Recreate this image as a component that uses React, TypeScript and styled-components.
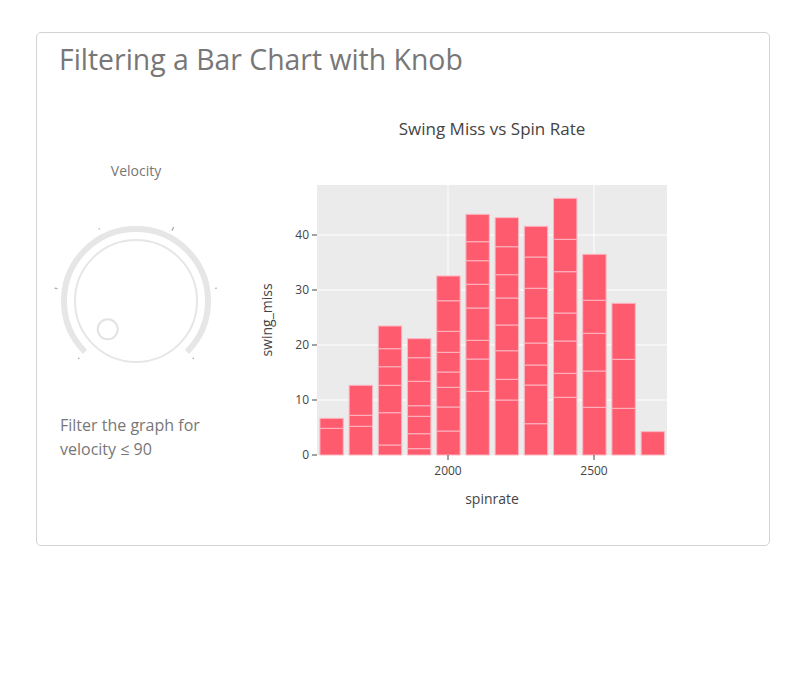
import styled, { createGlobalStyle } from 'styled-components';

const GlobalStyle = createGlobalStyle`
  body {
    margin: 0;
    background: #fff;
    font-family: "Open Sans", "Liberation Sans", sans-serif;
  }
`;

const Page = styled.div`
  padding: 32px 36px 0;
`;

const Card = styled.section`
  border: 1px solid #d3d3d3;
  border-radius: 5px;
  padding: 0 23px 10px;
`;

const Title = styled.h1`
  margin: 7px 0 7px -1px;
  font-size: 28.4px;
  font-weight: 400;
  line-height: 38px;
  color: #777;
`;

const Row = styled.div`
  display: flex;
  align-items: flex-start;
  gap: 25px;
`;

const KnobColumn = styled.div`
  width: 152px;
  flex: none;
  display: flex;
  flex-direction: column;
  padding-top: 76px;
`;

const KnobLabel = styled.div`
  text-align: center;
  font-size: 14px;
  line-height: 20px;
  color: #777;
`;

const KnobSvg = styled.svg`
  display: block;
  overflow: visible;
  margin-top: 35px;
`;

const Caption = styled.p`
  margin: 27px 0 0;
  font-size: 16px;
  line-height: 24px;
  color: #777;
`;

const ChartSvg = styled.svg`
  display: block;
  flex: none;
  font-family: "Open Sans", "Liberation Sans", sans-serif;
`;

// knob geometry
const ARC_R = 72;
const polar = (deg: number, r: number) => {
  const a = (deg * Math.PI) / 180;
  return { x: r * Math.cos(a), y: -r * Math.sin(a) };
};
const arcStart = polar(225, ARC_R);
const arcEnd = polar(-45, ARC_R);
const ARC_PATH = `M ${arcStart.x} ${arcStart.y} A ${ARC_R} ${ARC_R} 0 1 1 ${arcEnd.x} ${arcEnd.y}`;
const TICKS = [
  { deg: 225, len: 1.5 },
  { deg: 171, len: 3 },
  { deg: 117, len: 1.5 },
  { deg: 63, len: 4 },
  { deg: 9, len: 1.5 },
  { deg: -45, len: 1.5 },
];
const handle = polar(225, 40);

// chart geometry (svg coords)
const PLOT = { left: 80, top: 100, width: 350, height: 270 };
const Y_SCALE = 5.5;
const BIN_W = 29.2;
const yOf = (v: number) => PLOT.top + PLOT.height - v * Y_SCALE;

// stacked segment boundaries per 100-rpm bin, bottom to top
const BARS: number[][] = [
  [4.85, 6.67],
  [5.22, 7.22, 12.67],
  [1.82, 7.69, 12.67, 16.05, 19.33, 23.45],
  [1.15, 3.87, 7.04, 8.96, 13.4, 17.69, 21.15],
  [4.36, 8.73, 12.31, 15.09, 18.67, 22.49, 28.05, 32.55],
  [11.58, 17.45, 20.85, 26.73, 31.04, 35.33, 38.78, 43.76],
  [10, 13.76, 18.96, 23.64, 28.55, 32.78, 37.87, 43.15],
  [5.69, 12.73, 16.36, 20.36, 24.91, 30.31, 36, 41.58],
  [10.49, 14.85, 20.73, 25.82, 33.33, 39.22, 46.67],
  [8.67, 15.27, 22.13, 28.13, 36.49],
  [8.49, 17.4, 27.58],
  [4.24],
];

const Y_TICKS = [0, 10, 20, 30, 40];
const X_TICKS = [
  { label: '2000', x: 211 },
  { label: '2500', x: 357 },
];

function Knob() {
  return (
    <KnobSvg width={152} height={170} viewBox="-76 -85 152 170">
      <path d={ARC_PATH} fill="none" stroke="#e6e6e6" strokeWidth={6} />
      <circle r={61} fill="none" stroke="#e6e6e6" strokeWidth={2} />
      <circle cx={handle.x} cy={handle.y} r={10} fill="none" stroke="#e2e2e2" strokeWidth={2} />
      {TICKS.map((t) => {
        const a = polar(t.deg, 81 - t.len / 2);
        const b = polar(t.deg, 81 + t.len / 2);
        return (
          <line
            key={t.deg}
            x1={a.x}
            y1={a.y}
            x2={b.x}
            y2={b.y}
            stroke="#aaa"
            strokeWidth={1.2}
          />
        );
      })}
    </KnobSvg>
  );
}

function BarChart() {
  const bottom = PLOT.top + PLOT.height;
  return (
    <ChartSvg width={480} height={450} viewBox="0 0 480 450">
      <text x={255} y={50} textAnchor="middle" fontSize={17} fill="#444">
        Swing Miss vs Spin Rate
      </text>
      <rect x={PLOT.left} y={PLOT.top} width={PLOT.width} height={PLOT.height} fill="#ebebeb" />
      {Y_TICKS.filter((v) => v > 0).map((v) => (
        <line
          key={v}
          x1={PLOT.left}
          x2={PLOT.left + PLOT.width}
          y1={yOf(v)}
          y2={yOf(v)}
          stroke="#fff"
          strokeWidth={1}
        />
      ))}
      {X_TICKS.map((t) => (
        <line key={t.label} x1={t.x} x2={t.x} y1={PLOT.top} y2={bottom} stroke="#fff" strokeWidth={1} />
      ))}
      {BARS.map((bounds, i) => {
        const x = PLOT.left + i * BIN_W + BIN_W * 0.1;
        const w = BIN_W * 0.8;
        let prev = 0;
        return (
          <g key={i}>
            {bounds.map((top) => {
              const seg = (
                <rect
                  key={top}
                  x={x}
                  y={yOf(top)}
                  width={w}
                  height={(top - prev) * Y_SCALE}
                  fill="#ff5b6f"
                  stroke="#fcb7c2"
                  strokeWidth={1}
                />
              );
              prev = top;
              return seg;
            })}
          </g>
        );
      })}
      {Y_TICKS.map((v) => (
        <g key={v}>
          <line x1={PLOT.left - 5} x2={PLOT.left} y1={yOf(v)} y2={yOf(v)} stroke="#444" />
          <text x={PLOT.left - 8} y={yOf(v) + 4} textAnchor="end" fontSize={12} fill="#444">
            {v}
          </text>
        </g>
      ))}
      {X_TICKS.map((t) => (
        <g key={t.label}>
          <line x1={t.x} x2={t.x} y1={bottom} y2={bottom + 5} stroke="#444" />
          <text x={t.x} y={bottom + 20} textAnchor="middle" fontSize={12} fill="#444">
            {t.label}
          </text>
        </g>
      ))}
      <text x={255} y={419} textAnchor="middle" fontSize={14} fill="#444">
        spinrate
      </text>
      <text
        x={0}
        y={0}
        transform={`translate(35 ${PLOT.top + PLOT.height / 2}) rotate(-90)`}
        textAnchor="middle"
        fontSize={14}
        fill="#444"
      >
        swing_miss
      </text>
    </ChartSvg>
  );
}

export default function App() {
  return (
    <>
      <GlobalStyle />
      <Page>
        <Card>
          <Title>Filtering a Bar Chart with Knob</Title>
          <Row>
            <KnobColumn>
              <KnobLabel>Velocity</KnobLabel>
              <Knob />
              <Caption>
                Filter the graph for
                <br />
                velocity ≤ 90
              </Caption>
            </KnobColumn>
            <BarChart />
          </Row>
        </Card>
      </Page>
    </>
  );
}
